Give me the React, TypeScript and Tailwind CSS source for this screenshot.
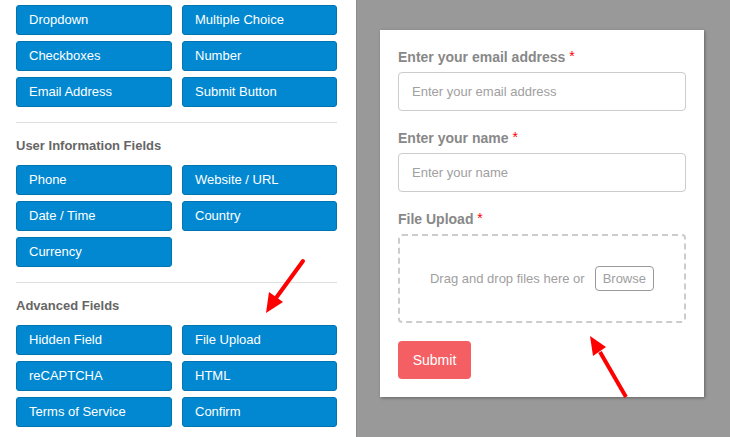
import React from "react";

const Btn = ({ label }: { label: string }) => (
  <div className="h-[30px] rounded-[3px] border border-[#0074b0] bg-[#0288d1] pl-[12px] text-[13px] leading-[28px] text-white">
    {label}
  </div>
);

const Section = ({ items }: { items: string[] }) => (
  <div className="grid grid-cols-[156px_155px] gap-x-[10px] gap-y-[6px]">
    {items.map((i) => (
      <Btn key={i} label={i} />
    ))}
  </div>
);

const Heading = ({ children }: { children: React.ReactNode }) => (
  <div className="mt-[15px] mb-[12px] h-[15px] text-[13px] font-bold leading-[15px] text-[#666]">
    {children}
  </div>
);

const Label = ({ children }: { children: React.ReactNode }) => (
  <div className="h-[18px] mb-[6px] text-[14px] font-bold leading-[18px] text-[#888]">
    {children} <span className="text-[#ff0000] font-normal relative top-[-1px]">*</span>
  </div>
);

export default function App() {
  return (
    <div
      className="relative flex h-[437px] w-[730px] overflow-hidden bg-white"
      style={{ fontFamily: '"Liberation Sans", Arial, sans-serif' }}
    >
      <div className="w-[357px] shrink-0 border-r border-[#8c8c8c] pl-[16px] pr-[19px] pt-[5px]">
        <Section items={["Dropdown", "Multiple Choice", "Checkboxes", "Number", "Email Address", "Submit Button"]} />
        <div className="mt-[15px] h-px w-[321px] bg-[#e0e0e0]" />
        <Heading>User Information Fields</Heading>
        <Section items={["Phone", "Website / URL", "Date / Time", "Country", "Currency"]} />
        <div className="mt-[15px] h-px w-[321px] bg-[#e0e0e0]" />
        <Heading>Advanced Fields</Heading>
        <Section items={["Hidden Field", "File Upload", "reCAPTCHA", "HTML", "Terms of Service", "Confirm"]} />
      </div>
      <div className="flex-1 bg-[#999999] pl-[23px] pt-[30px]">
        <div className="w-[324px] bg-white p-[18px] shadow-[1px_1px_3px_rgba(0,0,0,0.35)]">
          <Label>Enter your email address</Label>
          <div className="h-[39px] rounded-[4px] border border-[#cccccc] pl-[13px] text-[13px] leading-[37px] text-[#a0a0a0]">
            Enter your email address
          </div>
          <div className="h-[18px]" />
          <Label>Enter your name</Label>
          <div className="h-[39px] rounded-[4px] border border-[#cccccc] pl-[13px] text-[13px] leading-[37px] text-[#a0a0a0]">
            Enter your name
          </div>
          <div className="h-[18px]" />
          <Label>File Upload</Label>
          <div className="flex h-[89px] items-center justify-center gap-[10px] rounded-[4px] border-2 border-dashed border-[#cccccc] text-[13px] text-[#a0a0a0]">
            <span>Drag and drop files here or</span>
            <span className="h-[25px] rounded-[4px] border border-[#999] px-[7px] leading-[23px]">Browse</span>
          </div>
          <div className="h-[18px]" />
          <div className="h-[38px] w-[73px] rounded-[4px] bg-[#f45f63] text-center text-[14px] leading-[38px] text-white">
            Submit
          </div>
        </div>
      </div>
      <svg className="pointer-events-none absolute left-0 top-0" width="730" height="437">
        <line x1="303" y1="261" x2="276" y2="298" stroke="#ff0000" strokeWidth="4" strokeLinecap="round" />
        <polygon points="266,313 269,292 283,302" fill="#ff0000" />
        <line x1="626" y1="397" x2="600" y2="352" stroke="#ff0000" strokeWidth="4" />
        <polygon points="590,336 606,347 593,356" fill="#ff0000" />
      </svg>
    </div>
  );
}
